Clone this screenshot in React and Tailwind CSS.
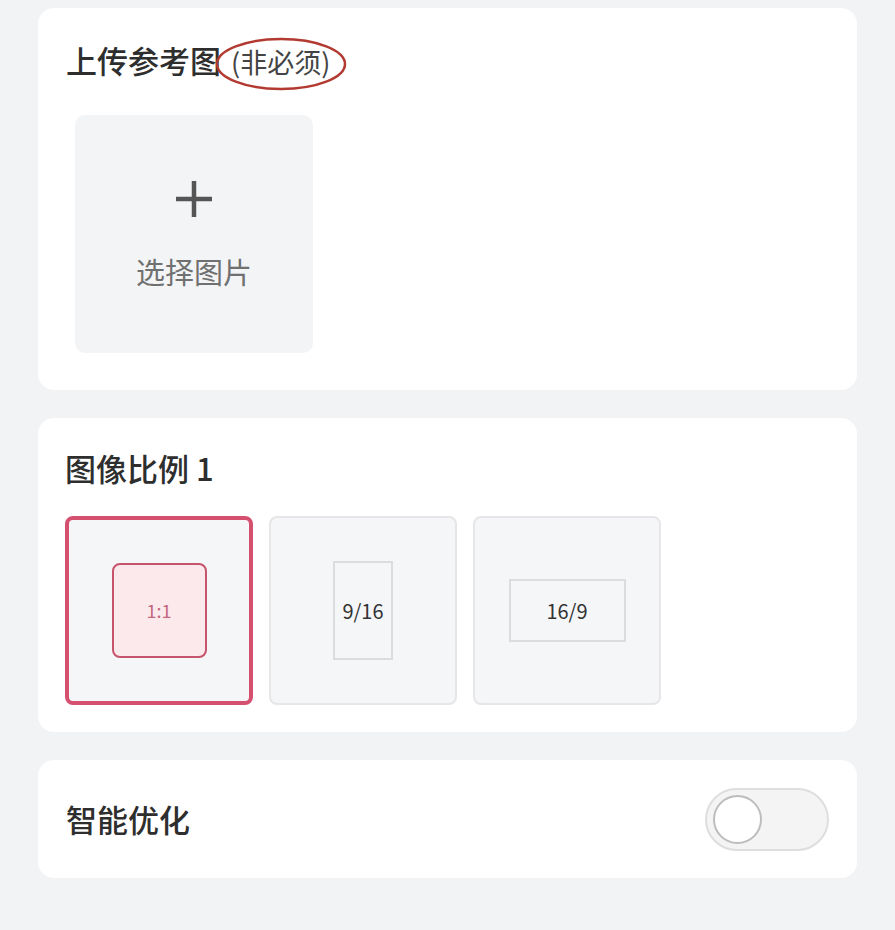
import { useState } from "react";

const font = { fontFamily: '"Noto Sans CJK SC", "Noto Sans", sans-serif' };

function RatioOption({ label, selected, innerClass, onClick }) {
    return (
        <button
            onClick={onClick}
            className={`w-[188px] h-[189px] rounded-[8px] bg-[#f5f6f8] flex items-center justify-center ${
                selected ? "border-[4px] border-[#d4506e]" : "border-2 border-[#e6e6e8]"
            }`}
        >
            <div
                className={`flex items-center justify-center ${innerClass} ${
                    selected
                        ? "border-2 border-[#c6546d] bg-[#fbe9ec] rounded-[8px] text-[#c3667e]"
                        : "border-2 border-[#dcdcde] text-[#333]"
                }`}
            >
                <span className={selected ? "text-[18px]" : "text-[20px]"}>{label}</span>
            </div>
        </button>
    );
}

export default function App() {
    const [ratio, setRatio] = useState("1:1");
    const [smart, setSmart] = useState(false);

    return (
        <div style={font} className="min-h-[930px] w-[895px] bg-[#f2f3f5] px-[38px] pt-[8px] flex flex-col gap-[28px]">
            {/* Upload reference */}
            <section className="bg-white rounded-[16px] pl-[28px] pt-[34px] pb-[37px]">
                <div className="flex items-baseline text-[#2e2e2e] h-[36px]">
                    <h2 className="text-[31px] leading-[36px] font-medium">上传参考图</h2>
                    <span className="relative ml-[10px] text-[27px] leading-[36px] text-[#444]">
                        (非必须)
                        <svg
                            className="absolute left-[-17px] top-[-9px] w-[134px] h-[56px] pointer-events-none"
                            viewBox="0 0 134 56"
                            fill="none"
                        >
                            <ellipse cx="67" cy="29" rx="64" ry="25" stroke="#b23a30" strokeWidth="2.5" />
                        </svg>
                    </span>
                </div>
                <button className="mt-[37px] ml-[9px] w-[238px] h-[238px] rounded-[10px] bg-[#f3f4f6] flex flex-col items-center justify-center">
                    <svg width="38" height="38" viewBox="0 0 38 38">
                        <path d="M19 1v36M1 19h36" stroke="#555" strokeWidth="4.5" />
                    </svg>
                    <span className="mt-[35px] text-[29px] leading-[36px] text-[#707070]">选择图片</span>
                </button>
            </section>

            {/* Ratio */}
            <section className="bg-white rounded-[16px] pl-[27px] pt-[32px] pb-[27px]">
                <h2 className="text-[31px] leading-[36px] font-medium text-[#2e2e2e]">图像比例 1</h2>
                <div className="mt-[30px] flex gap-[16px]">
                    <RatioOption
                        label="1:1"
                        selected={ratio === "1:1"}
                        innerClass="w-[95px] h-[95px]"
                        onClick={() => setRatio("1:1")}
                    />
                    <RatioOption
                        label="9/16"
                        selected={ratio === "9/16"}
                        innerClass="w-[60px] h-[99px]"
                        onClick={() => setRatio("9/16")}
                    />
                    <RatioOption
                        label="16/9"
                        selected={ratio === "16/9"}
                        innerClass="w-[117px] h-[63px]"
                        onClick={() => setRatio("16/9")}
                    />
                </div>
            </section>

            {/* Smart optimise */}
            <section className="bg-white rounded-[16px] pl-[28px] pr-[28px] h-[118px] flex items-center justify-between">
                <h2 className="text-[31px] leading-[36px] font-medium text-[#2e2e2e]">智能优化</h2>
                <button
                    onClick={() => setSmart(!smart)}
                    className={`w-[124px] h-[63px] rounded-full border-2 flex items-center px-[6px] ${
                        smart ? "bg-[#d4506e] border-[#d4506e] justify-end" : "bg-[#f4f4f5] border-[#dedede] justify-start"
                    }`}
                >
                    <span className="w-[49px] h-[49px] rounded-full bg-white border-2 border-[#bdbdbd]" />
                </button>
            </section>
        </div>
    );
}
